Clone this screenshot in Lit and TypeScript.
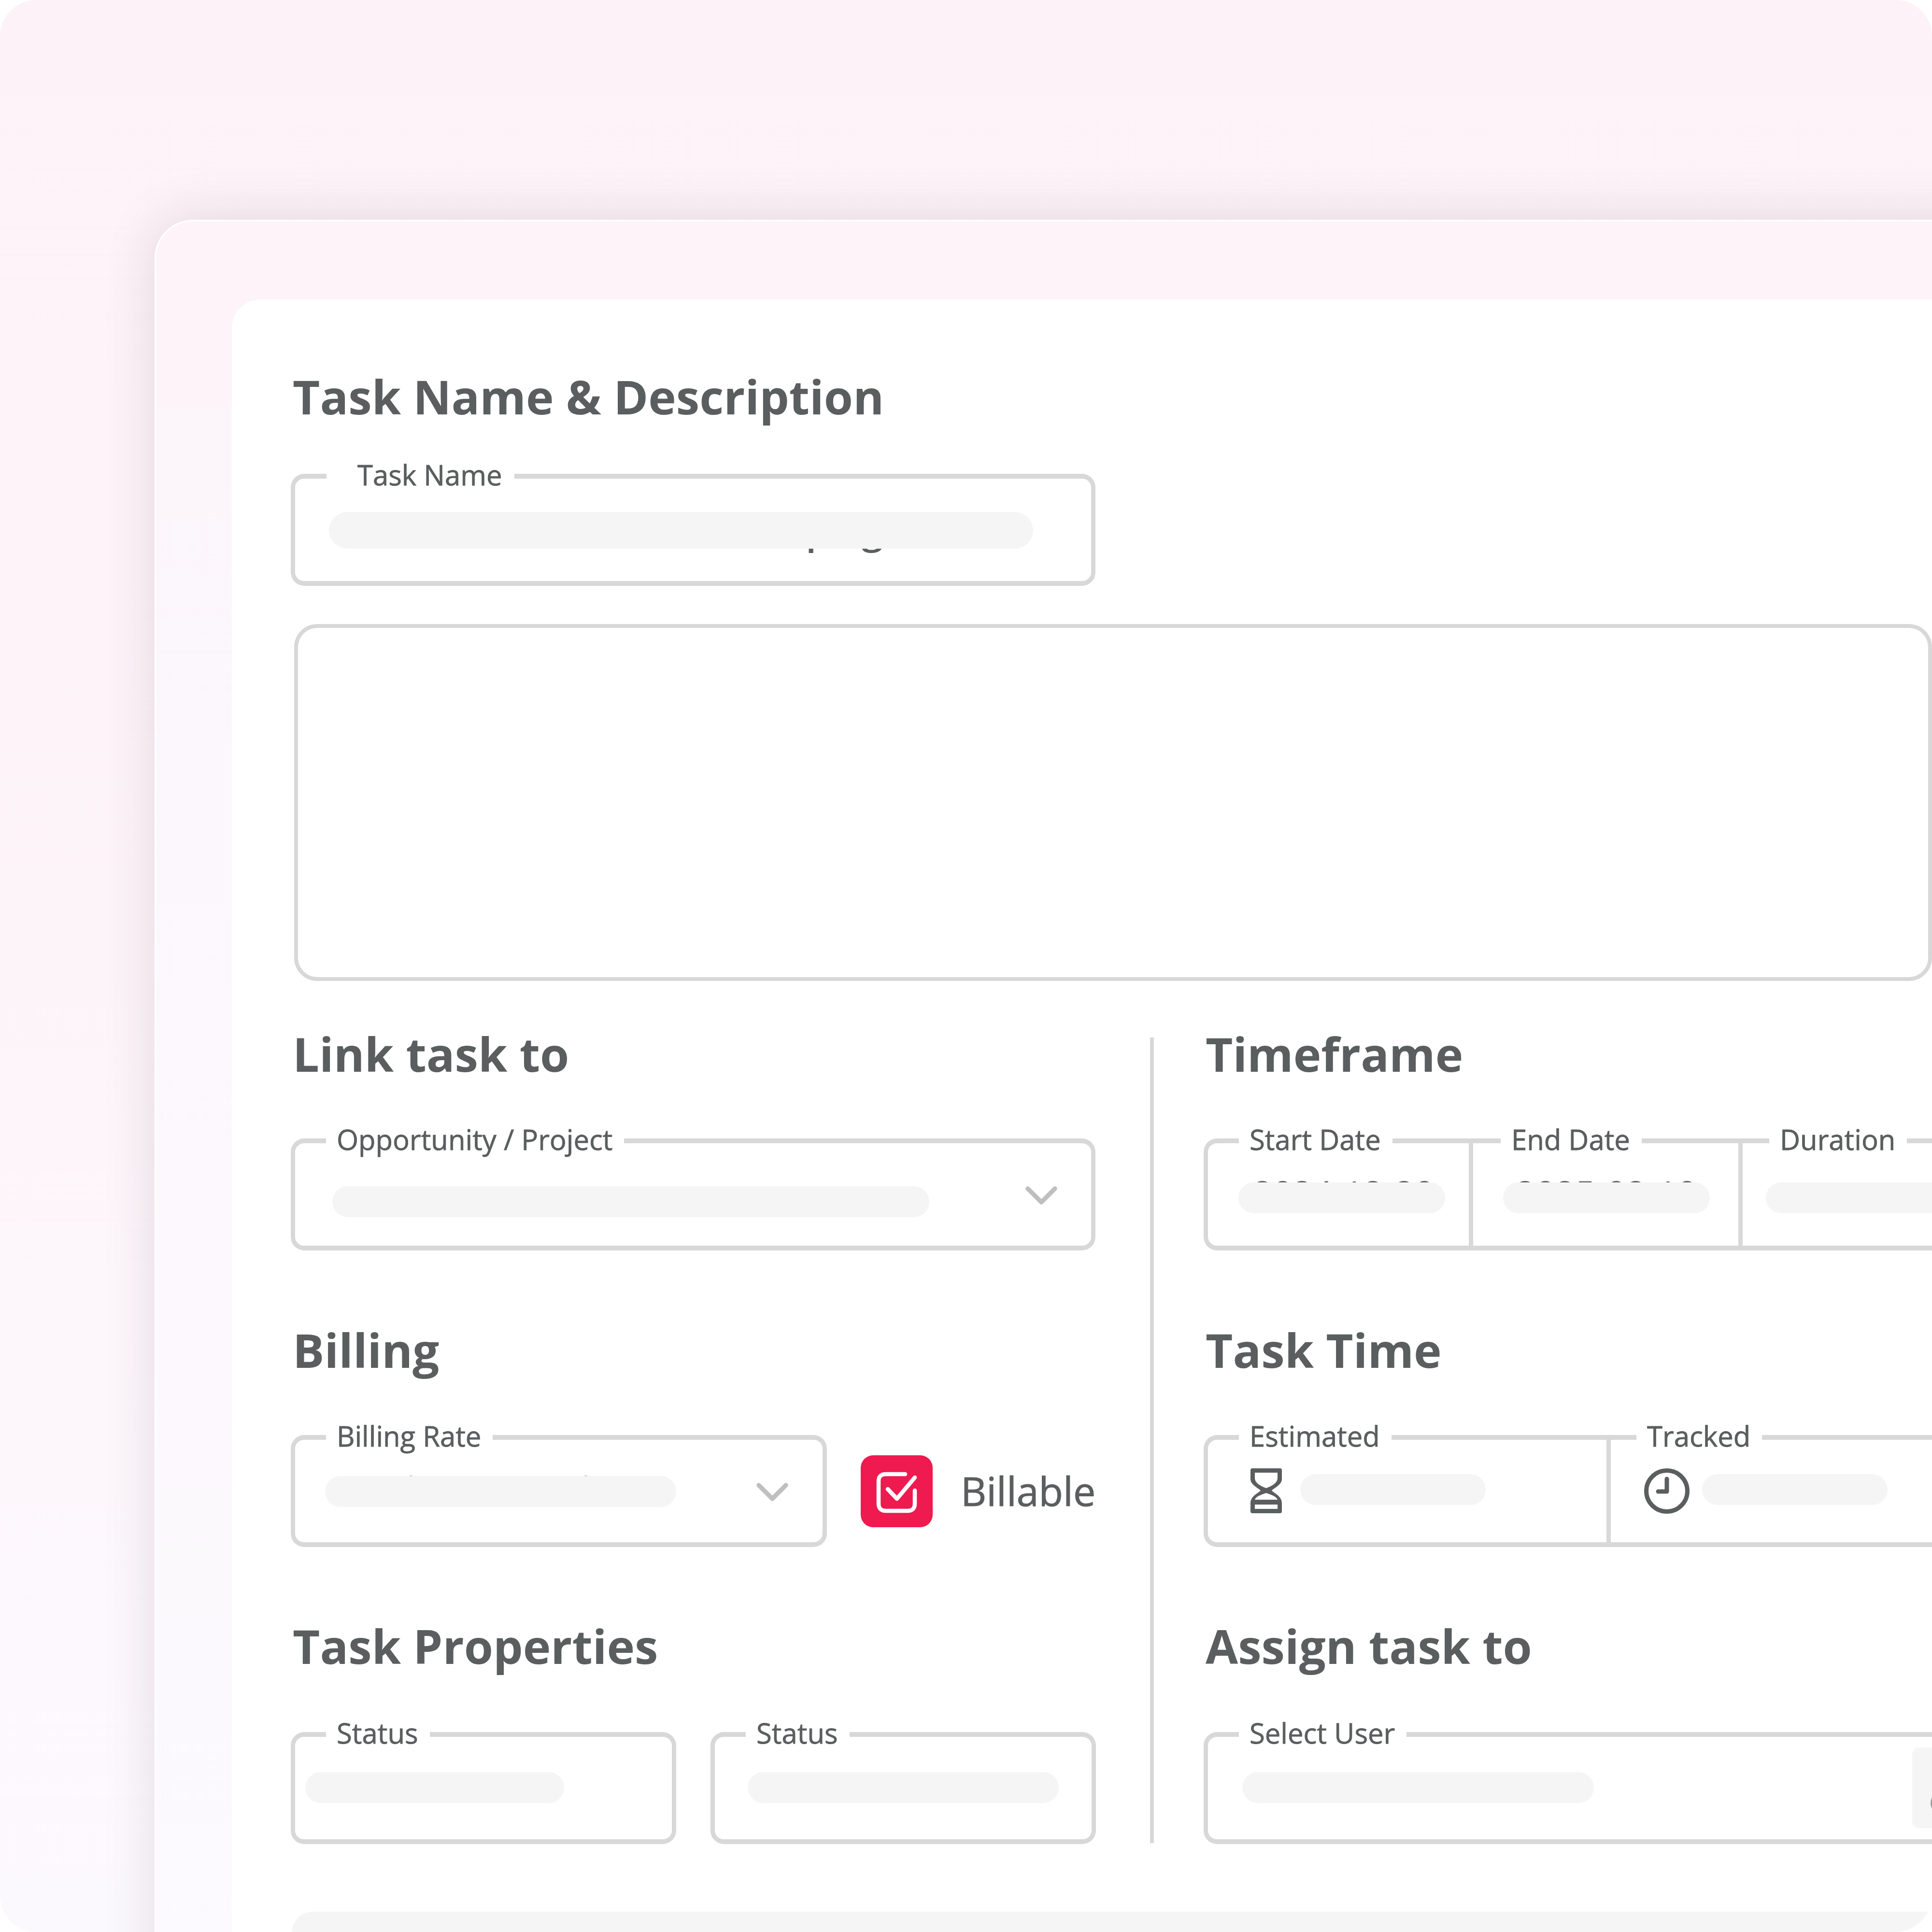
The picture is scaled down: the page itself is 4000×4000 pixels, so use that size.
import { LitElement, html, css } from "lit";
import { customElement } from "lit/decorators.js";

const chevron = html`<svg class="chev-svg" viewBox="0 0 66 38"><path d="M5 5 33 33 61 5" fill="none" stroke="#bfbfbf" stroke-width="9.5" stroke-linecap="round" stroke-linejoin="round"/></svg>`;

@customElement("app-root")
export class AppRoot extends LitElement {
  static styles = css`
    :host { display: block; width: 4000px; height: 4000px; overflow: hidden; background: #fff; font-family: "Open Sans", sans-serif; color: #5a5e5e; }
    * { box-sizing: border-box; }
    .page { width: 4000px; height: 4000px; overflow: hidden; border-radius: 75px; padding: 455px 0 0 320px; background: linear-gradient(180deg, #fdf2f7 0%, #fdf4f9 50%, #fdf8fd 85%, #fcf9fe 100%); }
    .window { width: 3900px; height: 3800px; padding: 162px 0 0 157px; border: 3px solid #fff; border-radius: 80px 0 0 0; box-shadow: 0 0 110px rgba(50, 30, 50, 0.13); background: linear-gradient(180deg, #fdf3f8 0, #fdf3f8 10%, #fcf6fb 10.4%, #fcfafe 100%); }
    .panel { width: 3800px; height: 3600px; padding: 141px 0 0 122px; background: #fff; border-radius: 60px 0 0 0; }
    h2 { margin: 0; padding-left: 4px; font-size: 97.4px; line-height: 120px; font-weight: 700; color: #5a5e5e; white-space: nowrap; }
    .box { position: relative; height: 232px; border: 9px solid #d8d8d8; border-width: 10px 9px; border-radius: 28px; background: #fff; }
    .label { position: absolute; top: -38px; left: 64px; padding: 0 24px 0 22px; background: #fff; font-size: 58px; -webkit-text-stroke: 0.8px #5a5e5e; line-height: 60px; white-space: nowrap; }
    .label.wide { left: 65px; padding: 0 25px 0 64px; }
    .sk { position: absolute; height: 64px; border-radius: 32px; background: #f5f5f5; }
    .peek { position: absolute; font-size: 72px; line-height: 72px; white-space: nowrap; }
    .peek.big { font-size: 80px; line-height: 80px; font-weight: 600; }
    .chev { position: absolute; width: 66px; height: 38px; }
    .chev-svg { display: block; width: 66px; height: 38px; }
    .gap-name { margin-top: 100px; width: 1666px; }
    .textarea { margin: 79px 0 0 7px; height: 739px; border: 8px solid #d8d8d8; border-radius: 48px; width: 3391px; }
    .cols { display: flex; margin-top: 91px; }
    .col-l { width: 1666px; flex: none; }
    .divider { flex: none; width: 8px; height: 1668px; margin: 26px 103px 0 113px; background: #d8d8d8; }
    .col-r { width: 1600px; flex: none; }
    .sec { margin-top: 146px; }
    .sec.last { margin-top: 145px; }
    .below { margin-top: 115px; }
    .below.b2 { margin-top: 116px; }
    .below.b3 { margin-top: 118px; }
    .row { display: flex; align-items: center; }
    .billing { width: 1110px; flex: none; }
    .check { width: 149px; height: 149px; margin: 0 58px 0 70px; flex: none; border-radius: 26px; background: #ee1a50; }
    .check svg { display: block; width: 149px; height: 149px; }
    .billable { font-size: 82.5px; -webkit-text-stroke: 1px #5a5e5e; line-height: 100px; margin-bottom: 3px; white-space: nowrap; }
    .two { display: flex; gap: 71px; }
    .two .box { width: 798px; flex: none; }
    .wide-box { width: 1700px; }
    .cell { position: absolute; top: 0; bottom: 0; width: 9px; background: #d8d8d8; }
    .icon { position: absolute; }
    .square { position: absolute; left: 1458px; top: 22px; width: 160px; height: 167px; background: #f5f5f5; border-radius: 14px; overflow: hidden; }
    .ring { position: absolute; left: 38px; top: 90px; width: 50px; height: 50px; border: 4px solid #9a9c9c; border-radius: 50%; }
    .bottom { margin: 140px 0 0 2px; width: 3399px; height: 44px; overflow: hidden; border-top-left-radius: 60px; }
    .bottom-fill { height: 86px; margin-top: -42px; background: #f5f5f5; border-radius: 0 0 86px 0; }
  `;

  render() {
    return html`<div class="page"><div class="window"><div class="panel">
      <h2>Task Name &amp; Description</h2>
      <div class="box gap-name">
        <span class="label wide">Task Name</span>
        <span class="peek big" style="left:1057px;top:64px">p</span>
        <span class="peek big" style="left:1173px;top:64px">g</span>
        <div class="sk" style="left:70px;top:69px;width:1458px;height:76px;border-radius:38px"></div>
      </div>
      <div class="textarea"></div>
      <div class="cols">
        <div class="col-l">
          <h2>Link task to</h2>
          <div class="box below">
            <span class="label">Opportunity / Project</span>
            <div class="sk" style="left:77px;top:89px;width:1236px"></div>
            <div class="chev" style="left:1512px;top:89px">${chevron}</div>
          </div>
          <div class="sec">
            <h2>Billing</h2>
            <div class="row below b2">
              <div class="box billing">
                <span class="label">Billing Rate</span>
                <span class="peek" style="left:231px;top:65px">l</span>
                <span class="peek" style="left:593px;top:65px">l</span>
                <div class="sk" style="left:62px;top:75px;width:727px"></div>
                <div class="chev" style="left:955px;top:89px">${chevron}</div>
              </div>
              <div class="check"><svg viewBox="0 0 149 149"><path d="M92 39H52Q37 39 37 54V100Q37 115 52 115H97Q112 115 112 100V73" fill="none" stroke="#fff" stroke-width="8.5" stroke-linecap="round"/><path d="M56 70 75 90 112 46" fill="none" stroke="#fff" stroke-width="8.5" stroke-linecap="round" stroke-linejoin="round"/></svg></div>
              <span class="billable">Billable</span>
            </div>
          </div>
          <div class="sec last">
            <h2>Task Properties</h2>
            <div class="two below b3">
              <div class="box"><span class="label">Status</span><div class="sk" style="left:21px;top:73px;width:536px"></div></div>
              <div class="box"><span class="label">Status</span><div class="sk" style="left:68px;top:73px;width:644px"></div></div>
            </div>
          </div>
        </div>
        <div class="divider"></div>
        <div class="col-r">
          <h2>Timeframe</h2>
          <div class="box below wide-box">
            <span class="label">Start Date</span>
            <span class="label" style="left:606px">End Date</span>
            <span class="label" style="left:1162px">Duration</span>
            <div class="cell" style="left:540px"></div>
            <div class="cell" style="left:1098px"></div>
            <span class="peek" style="left:93px;top:66px">2024-12-20</span>
            <span class="peek" style="left:637px;top:66px">2025-02-10</span>
            <div class="sk" style="left:63px;top:81px;width:428px"></div>
            <div class="sk" style="left:611px;top:81px;width:428px"></div>
            <div class="sk" style="left:1155px;top:81px;width:428px"></div>
          </div>
          <div class="sec">
            <h2>Task Time</h2>
            <div class="box below b2 wide-box">
              <span class="label">Estimated</span>
              <span class="label" style="left:887px">Tracked</span>
              <div class="cell" style="left:825px"></div>
              <svg class="icon" style="left:88px;top:59px;width:65px;height:93px" viewBox="0 0 65 93">
                <path fill-rule="evenodd" fill="#5a5e5e" d="M4 0H61Q65 0 65 4V22C65 34 50 40 44 46 50 52 65 58 65 72V89Q65 93 61 93H4Q0 93 0 89V72C0 58 15 52 21 46 15 40 0 34 0 22V4Q0 0 4 0ZM9 9V20C9 32 25 38 32.5 41 40 38 56 32 56 20V9ZM32.5 51C24 54 11 58 9 65H56C54 58 41 54 32.5 51ZM9 75V84H56V75Z"/>
              </svg>
              <div class="sk" style="left:191px;top:71px;width:384px"></div>
              <svg class="icon" style="left:903px;top:59px;width:94px;height:94px" viewBox="0 0 94 94">
                <circle cx="47" cy="47" r="42.5" fill="none" stroke="#5a5e5e" stroke-width="9"/>
                <path d="M47 22V48H29" fill="none" stroke="#5a5e5e" stroke-width="9" stroke-linecap="round" stroke-linejoin="round"/>
              </svg>
              <div class="sk" style="left:1023px;top:71px;width:384px"></div>
            </div>
          </div>
          <div class="sec last">
            <h2>Assign task to</h2>
            <div class="box below b3 wide-box">
              <span class="label">Select User</span>
              <span class="peek" style="left:394px;top:64px">l</span>
              <div class="sk" style="left:71px;top:73px;width:728px"></div>
              <div class="square"><div class="ring"></div></div>
            </div>
          </div>
        </div>
      </div>
      <div class="bottom"><div class="bottom-fill"></div></div>
    </div></div></div>`;
  }
}
